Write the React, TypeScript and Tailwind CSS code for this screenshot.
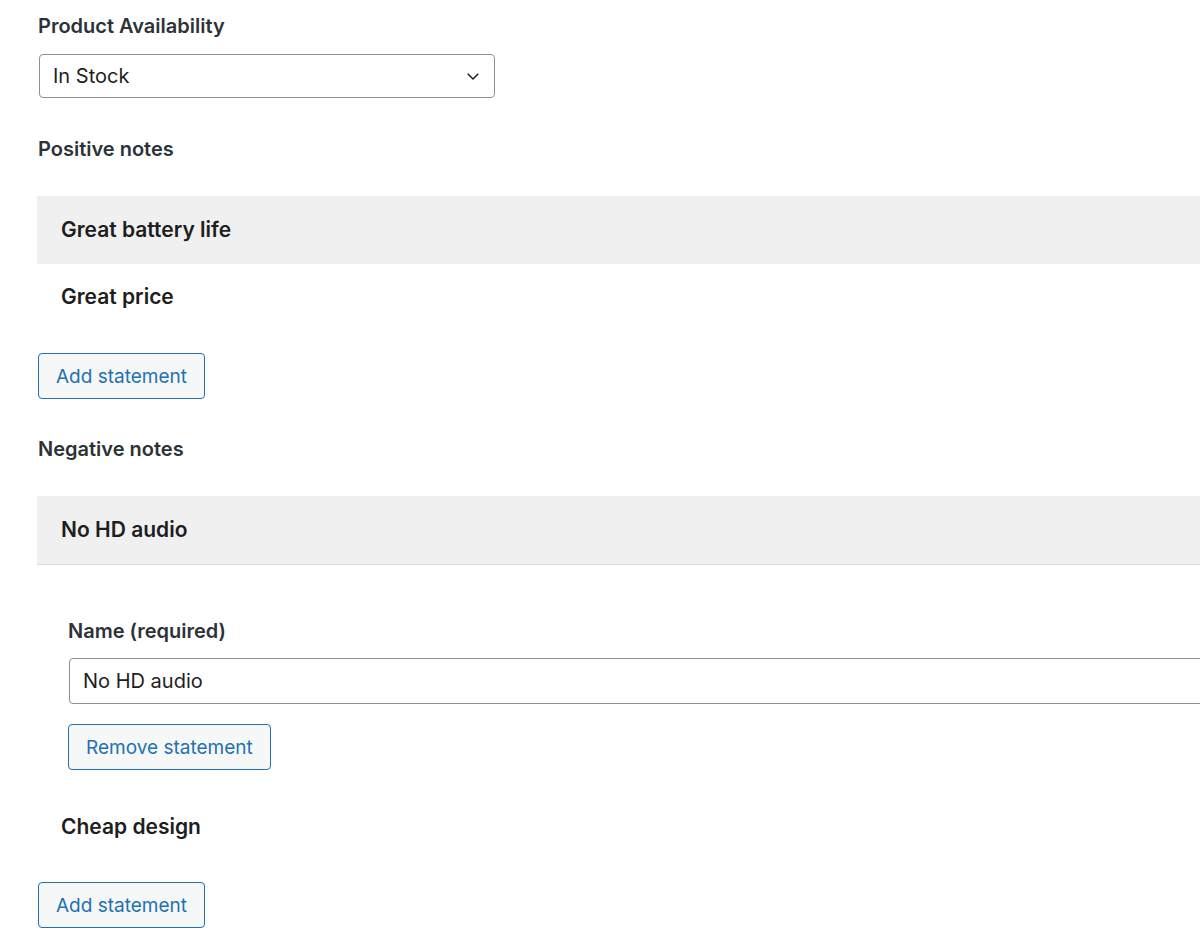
import React from "react";

const Btn = ({ children }: { children: React.ReactNode }) => (
  <button className="h-[46px] px-[17px] rounded-[4px] border border-[#2271b1] bg-[#f6f7f7] text-[#2271b1] text-[19px] leading-none">
    {children}
  </button>
);

export default function App() {
  return (
    <div className="w-[1200px] h-[943px] overflow-hidden bg-white text-[#1e1e1e]" style={{ fontFamily: "Inter, 'Noto Sans', sans-serif" }}>
      <div className="pl-[38px] pt-[14px]">
        <div className="text-[20px] font-semibold text-[#2c3338] leading-[24px]">Product Availability</div>
        <div className="mt-[16px] ml-[1px] w-[456px] h-[44px] border border-[#8c8f94] rounded-[4px] flex items-center justify-between pl-[13px] pr-[12px]">
          <span className="text-[20px]">In Stock</span>
          <svg width="18" height="18" viewBox="0 0 24 24" fill="none" stroke="#1e1e1e" strokeWidth="2"><path d="M5 9l7 7 7-7" /></svg>
        </div>
        <div className="mt-[39px] text-[20px] font-semibold text-[#2c3338] leading-[24px]">Positive notes</div>
      </div>
      <div className="mt-[35px] ml-[37px] h-[68px] bg-[#f0f0f0] flex items-center pl-[24px] text-[21px] font-semibold">Great battery life</div>
      <div className="ml-[37px] h-[66px] flex items-center pl-[24px] text-[21px] font-semibold">Great price</div>
      <div className="ml-[38px] mt-[23px]"><Btn>Add statement</Btn></div>
      <div className="ml-[38px] mt-[38px] text-[20px] font-semibold text-[#2c3338] leading-[24px]">Negative notes</div>
      <div className="mt-[35px] ml-[37px] h-[69px] bg-[#f0f0f0] border-b border-[#dcdcde] flex items-center pl-[24px] text-[21px] font-semibold">No HD audio</div>
      <div className="ml-[68px] mt-[54px]">
        <div className="text-[20px] font-semibold text-[#2c3338] leading-[24px]">Name (required)</div>
        <div className="mt-[15px] ml-[1px] w-[1200px] h-[46px] border border-[#8c8f94] rounded-[4px] flex items-center pl-[13px] text-[20px]">No HD audio</div>
        <div className="mt-[20px]"><Btn>Remove statement</Btn></div>
      </div>
      <div className="ml-[37px] mt-[35px] h-[44px] flex items-center pl-[24px] text-[21px] font-semibold">Cheap design</div>
      <div className="ml-[38px] mt-[33px]"><Btn>Add statement</Btn></div>
    </div>
  );
}
